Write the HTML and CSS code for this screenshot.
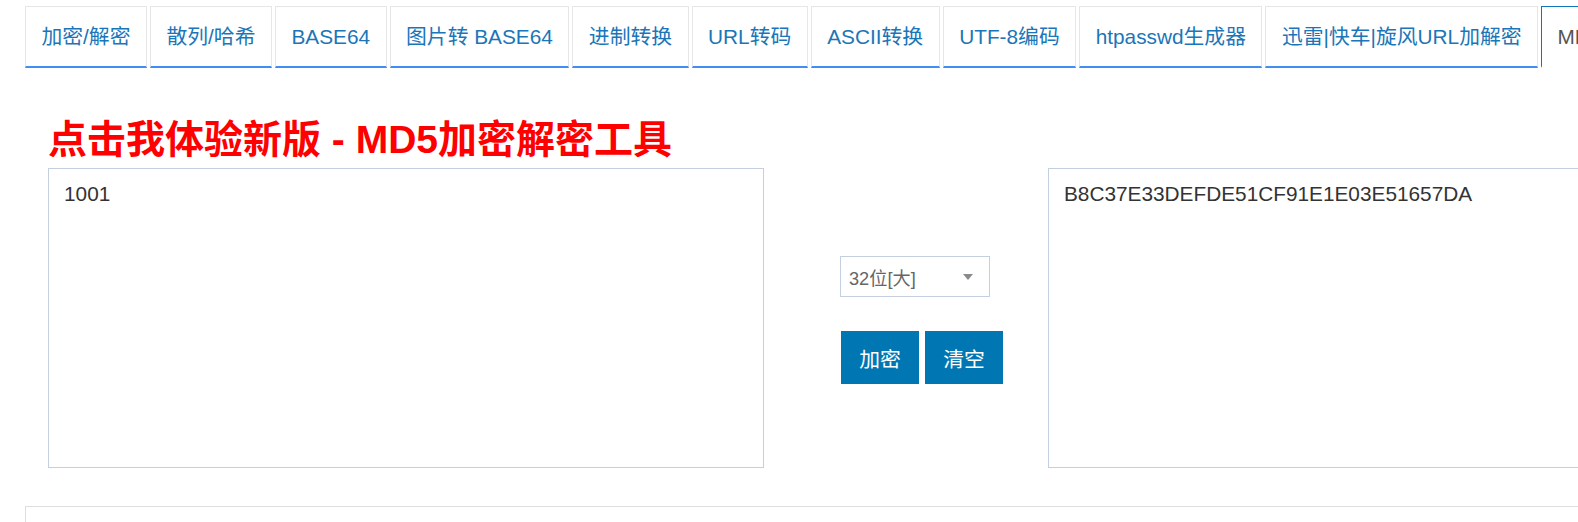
FILE: index.html
```html
<!DOCTYPE html>
<html lang="zh-CN">
<head>
<meta charset="utf-8">
<title>MD5加密解密</title>
<link rel="stylesheet" href="styles.css">
</head>
<body>
<div class="page">
  <ul class="tabs">
    <li class="tab">加密/解密</li>
    <li class="tab">散列/哈希</li>
    <li class="tab">BASE64</li>
    <li class="tab">图片转 BASE64</li>
    <li class="tab">进制转换</li>
    <li class="tab">URL转码</li>
    <li class="tab">ASCII转换</li>
    <li class="tab">UTF-8编码</li>
    <li class="tab">htpasswd生成器</li>
    <li class="tab">迅雷|快车|旋风URL加解密</li>
    <li class="tab tab-active">MD5加密/解密</li>
  </ul>
  <div class="main">
    <h1 class="title">点击我体验新版 - MD5加密解密工具</h1>
    <div class="row">
      <textarea class="box" readonly>1001</textarea>
      <div class="middle">
        <div class="select"><span class="select-text">32位[大]</span><span class="caret"></span></div>
        <div class="buttons">
          <button class="btn">加密</button>
          <button class="btn">清空</button>
        </div>
      </div>
      <textarea class="box" readonly>B8C37E33DEFDE51CF91E1E03E51657DA</textarea>
    </div>
  </div>
  <div class="bottom-box"></div>
</div>
</body>
</html>
```
FILE: styles.css
```css
html, body {
  margin: 0;
  padding: 0;
  background: #fff;
  overflow: hidden;
}
body {
  font-family: "Liberation Sans", Arial, "Noto Sans CJK SC", sans-serif;
}
.page {
  width: 2000px;
  display: flex;
  flex-direction: column;
}
.tabs {
  list-style: none;
  margin: 6px 0 0 25px;
  padding: 0;
  display: flex;
  gap: 3px;
  flex-wrap: nowrap;
}
.tab {
  flex-shrink: 0;
  border: 1px solid #e6e6e6;
  border-bottom: 2px solid #418df0;
  padding: 0 15.5px;
  height: 59px;
  line-height: 60px;
  font-size: 20.8px;
  color: #1a76b8;
  white-space: nowrap;
}
.tab-active {
  border: 1px solid #0f76bd;
  border-bottom: 2px solid #fff;
  color: #555;
}
.main {
  padding-left: 48px;
  display: flex;
  flex-direction: column;
}
.title {
  margin: 48px 0 0 0;
  height: 48px;
  line-height: 48px;
  font-size: 39px;
  font-weight: bold;
  color: #ff0000;
  white-space: nowrap;
}
.row {
  margin-top: 4px;
  display: flex;
  flex-wrap: nowrap;
}
.box {
  flex-shrink: 0;
  box-sizing: border-box;
  width: 716px;
  height: 300px;
  margin: 0;
  border: 1px solid #c4cfdf;
  border-radius: 0;
  padding: 9px 15px;
  font-family: "Liberation Sans", Arial, "Noto Sans CJK SC", sans-serif;
  font-size: 20.8px;
  line-height: 1.5;
  color: #333;
  resize: none;
  outline: none;
  background: #fff;
}
.middle {
  flex-shrink: 0;
  width: 284px;
  box-sizing: border-box;
  padding: 88px 0 0 76px;
  display: flex;
  flex-direction: column;
  gap: 34px;
}
.select {
  box-sizing: border-box;
  width: 150px;
  height: 41px;
  border: 1px solid #c4cfdf;
  display: flex;
  align-items: center;
  padding: 0 16px 0 8px;
  font-size: 18.2px;
  color: #666;
}
.select-text {
  flex: 1;
}
.caret {
  width: 0;
  height: 0;
  border-left: 5.5px solid transparent;
  border-right: 5.5px solid transparent;
  border-top: 6px solid #8a8a8a;
}
.buttons {
  display: flex;
  gap: 6px;
  padding-left: 1px;
}
.btn {
  box-sizing: border-box;
  width: 78px;
  height: 53px;
  border: none;
  border-radius: 0;
  background: #0077b3;
  color: #fff;
  font-family: "Liberation Sans", Arial, "Noto Sans CJK SC", sans-serif;
  font-size: 20.8px;
  padding: 0;
  cursor: pointer;
}
.bottom-box {
  margin: 38px 0 0 25px;
  height: 100px;
  border: 1px solid #dedede;
}
```
